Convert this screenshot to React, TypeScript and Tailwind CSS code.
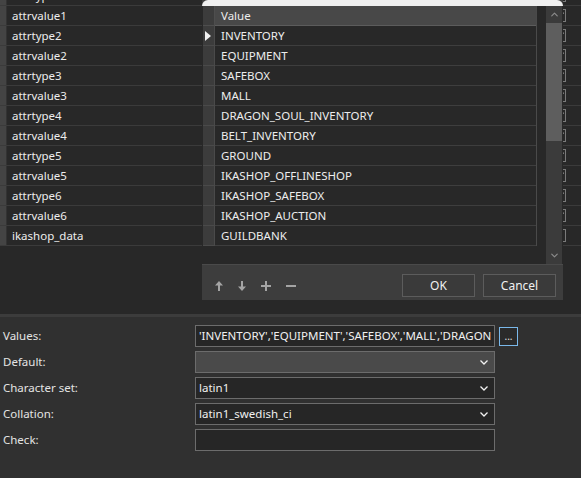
import { ChevronDown, ChevronUp } from "lucide-react"

const fields = [
  "attrtype1",
  "attrvalue1",
  "attrtype2",
  "attrvalue2",
  "attrtype3",
  "attrvalue3",
  "attrtype4",
  "attrvalue4",
  "attrtype5",
  "attrvalue5",
  "attrtype6",
  "attrvalue6",
  "ikashop_data",
]

const values = [
  "INVENTORY",
  "EQUIPMENT",
  "SAFEBOX",
  "MALL",
  "DRAGON_SOUL_INVENTORY",
  "BELT_INVENTORY",
  "GROUND",
  "IKASHOP_OFFLINESHOP",
  "IKASHOP_SAFEBOX",
  "IKASHOP_AUCTION",
  "GUILDBANK",
]

function Check({ checked }: { checked: boolean }) {
  return (
    <div className="relative w-[12px] h-[13px] border border-[#7a7a7a]">
      {checked && (
        <svg viewBox="0 0 12 13" className="absolute inset-0 w-full h-full">
          <path d="M2 8 L4.5 10.5 L10 3" stroke="#e8e8e8" strokeWidth="1.4" fill="none" />
        </svg>
      )}
    </div>
  )
}

function Chevron() {
  return (
    <svg viewBox="0 0 8 5" className="w-[8px] h-[5px]">
      <path d="M0.5 0.5 L4 4 L7.5 0.5" stroke="#f2f2f2" strokeWidth="1.3" fill="none" />
    </svg>
  )
}

function FieldRow({ label, children }: { label: string; children: React.ReactNode }) {
  return (
    <div className="flex items-center h-[22px]">
      <div className="w-[192px] text-[#e4e4e4]">{label}</div>
      {children}
    </div>
  )
}

function Select({ text, disabled }: { text: string; disabled?: boolean }) {
  return (
    <div
      className={`w-[300px] h-[22px] flex items-center justify-between pl-[3px] pr-[6px] border border-[#6c6c6c] ${
        disabled ? "bg-[#4a4a4a]" : "bg-[#262626]"
      } text-[#f0f0f0]`}
    >
      <span>{text}</span>
      <Chevron />
    </div>
  )
}

export default function App() {
  return (
    <div
      className="relative w-[581px] h-[478px] overflow-hidden flex flex-col bg-[#282828] text-[11.5px] leading-none"
      style={{ fontFamily: '"Noto Sans", "Open Sans", sans-serif' }}
    >
      {/* table of columns */}
      <div className="h-[314px] overflow-hidden">
        <div className="-mt-[14px]">
          {fields.map((name, i) => (
            <div key={name} className="flex h-5 border-b border-[#3b3b3b]">
              <div className="w-[7px] bg-[#444] border-r border-[#333]" />
              <div className="flex-1 flex items-center pl-[5px] text-[#ededed]">{name}</div>
              <div className="w-[29px] flex items-center pl-[2px]">
                <Check checked={i < fields.length - 1} />
              </div>
            </div>
          ))}
        </div>
      </div>

      <div className="h-[3px] bg-[#3c3c3c]" />

      {/* column properties */}
      <div className="flex-1 bg-[#303030] pt-[8px] pl-[3px] flex flex-col gap-[4px]">
        <FieldRow label="Values:">
          <div className="w-[300px] h-[22px] flex items-center pl-[3px] border border-[#6c6c6c] bg-[#262626] text-[#f0f0f0] overflow-hidden whitespace-nowrap">
            'INVENTORY','EQUIPMENT','SAFEBOX','MALL','DRAGON
          </div>
          <div className="ml-[4px] w-[19px] h-[19px] border border-[#7ab8ea] bg-[#2a2a2a] flex items-center justify-center text-[#e0e0e0] text-[10px] leading-none">
            ...
          </div>
        </FieldRow>
        <FieldRow label="Default:">
          <Select text="" disabled />
        </FieldRow>
        <FieldRow label="Character set:">
          <Select text="latin1" />
        </FieldRow>
        <FieldRow label="Collation:">
          <Select text="latin1_swedish_ci" />
        </FieldRow>
        <FieldRow label="Check:">
          <div className="w-[300px] h-[22px] border border-[#6c6c6c] bg-[#262626]" />
        </FieldRow>
      </div>

      {/* set values popup */}
      <div className="absolute left-[202px] top-0 w-[361px] h-[300px] flex flex-col bg-[#3d3d3d]">
        <div className="h-[6px] bg-[#f0f0f0] rounded-t-[6px]" />
        <div className="flex h-[259px] pl-px bg-[#282828] border-b border-[#4a4a4a]">
          <div className="w-[334px] flex flex-col">
            <div className="border-r border-[#4a4a4a]">
              <div className="flex h-5">
                <div className="w-[12px] bg-[#3c3c3c] border-r border-b border-[#4e4e4e]" />
                <div className="flex-1 flex items-center pl-[6px] bg-[#484848] border-b border-[#5c5c5c] text-[#ececec]">
                  Value
                </div>
              </div>
              {values.map((v, i) => (
                <div key={v} className="flex h-5">
                  <div className="w-[12px] bg-[#3c3c3c] border-r border-b border-[#4a4a4a] flex items-center">
                    {i === 0 && (
                      <svg viewBox="0 0 7 10" className="w-[7px] h-[10px] ml-[2px]">
                        <path d="M0 0 L6 5 L0 10 Z" fill="#f0f0f0" />
                      </svg>
                    )}
                  </div>
                  <div className="flex-1 flex items-center pl-[6px] border-b border-[#3e3e3e] text-[#ededed]">{v}</div>
                </div>
              ))}
            </div>
          </div>
          <div className="w-[9px]" />
          <div className="w-[16px] flex flex-col bg-[#3b3b3b]">
            <div className="h-[17px] flex items-center justify-center text-[#8c8c8c]">
              <ChevronUp size={11} strokeWidth={2.5} />
            </div>
            <div className="h-[118px] bg-[#5e5e5e]" />
            <div className="flex-1" />
            <div className="h-[17px] flex items-center justify-center text-[#8c8c8c]">
              <ChevronDown size={11} strokeWidth={2.5} />
            </div>
          </div>
        </div>
        <div className="flex-1 flex items-start justify-between pl-[13px] pr-[7px] pt-[9px]">
          <div className="flex items-center gap-[13px] h-[23px] text-[#a4a4a4]">
            <svg viewBox="0 0 8 10" className="w-[8px] h-[10px]">
              <path d="M4 0 L8 4.5 L5 4.5 L5 10 L3 10 L3 4.5 L0 4.5 Z" fill="#a4a4a4" />
            </svg>
            <svg viewBox="0 0 8 10" className="w-[8px] h-[10px] mx-[2px]">
              <path d="M4 10 L8 5.5 L5 5.5 L5 0 L3 0 L3 5.5 L0 5.5 Z" fill="#a4a4a4" />
            </svg>
            <svg viewBox="0 0 10 10" className="w-[10px] h-[10px]">
              <path d="M4 0 H6 V4 H10 V6 H6 V10 H4 V6 H0 V4 H4 Z" fill="#a4a4a4" />
            </svg>
            <svg viewBox="0 0 10 10" className="w-[10px] h-[10px] ml-[2px]">
              <path d="M0 4 H10 V6 H0 Z" fill="#a4a4a4" />
            </svg>
          </div>
          <div className="flex gap-[8px]">
            <div className="w-[73px] h-[23px] flex items-center justify-center bg-[#3a3a3a] border border-[#5c5c5c] text-[#f0f0f0] text-[12px]">
              OK
            </div>
            <div className="w-[73px] h-[23px] flex items-center justify-center bg-[#3a3a3a] border border-[#5c5c5c] text-[#f0f0f0] text-[12px]">
              Cancel
            </div>
          </div>
        </div>
      </div>
    </div>
  )
}
